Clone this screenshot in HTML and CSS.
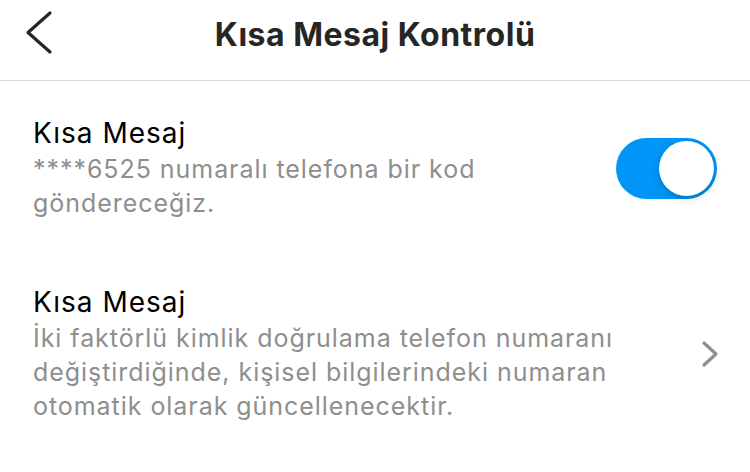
FILE: index.html
```html
<!DOCTYPE html>
<html lang="tr">

<head>
    <meta charset="UTF-8">
    <meta name="viewport" content="width=device-width, initial-scale=1.0">
    <title>Kısa Mesaj Kontrolü</title>
    <link rel="stylesheet" href="styles.css">
</head>

<body>
    <!-- Header -->
    <div class="header">
        <button class="back">
            <svg width="30" height="50" viewBox="0 0 30 50">
                <polyline points="26,3 4,22.5 26,42" fill="none" stroke="#262626" stroke-width="3.2"
                    stroke-linecap="round" stroke-linejoin="round" />
            </svg>
        </button>
        <h1 class="title">Kısa Mesaj Kontrolü</h1>
        <div></div>
    </div>

    <!-- Rows -->
    <div class="row">
        <div class="row-text">
            <div class="row-title">Kısa Mesaj</div>
            <div class="row-desc">****6525 numaralı telefona bir kod göndereceğiz.</div>
        </div>
        <div class="switch on">
            <span class="knob"></span>
        </div>
    </div>

    <div class="row">
        <div class="row-text">
            <div class="row-title">Kısa Mesaj</div>
            <div class="row-desc">İki faktörlü kimlik doğrulama telefon numaranı değiştirdiğinde, kişisel bilgilerindeki numaran otomatik olarak güncellenecektir.</div>
        </div>
        <svg class="chevron" width="20" height="30" viewBox="0 0 20 30">
            <polyline points="4,4 16,15 4,26" fill="none" stroke="#8e8e8e" stroke-width="3.2"
                stroke-linecap="round" stroke-linejoin="round" />
        </svg>
    </div>
</body>

</html>
```

FILE: styles.css
```css
* {
    box-sizing: border-box;
}

body {
    margin: 0;
    background-color: #fff;
    font-family: Inter, "Noto Sans", sans-serif;
    color: #000;
}

.header {
    display: grid;
    grid-template-columns: 1fr auto 1fr;
    align-items: center;
    height: 81px;
    padding-bottom: 11px;
    border-bottom: 1px solid #dbdbdb;
}

.back {
    justify-self: start;
    display: flex;
    margin-left: 24px;
    padding: 0;
    border: none;
    background: none;
}

.title {
    margin: 0;
    font-size: 32px;
    font-weight: 700;
    letter-spacing: 0.5px;
    color: #262626;
}

.row {
    display: flex;
    align-items: center;
    gap: 40px;
    padding: 35px 33px 30px;
}

.row-text {
    flex: 1;
}

.row-title {
    font-size: 28px;
    line-height: 34px;
    letter-spacing: 1px;
}

.row-desc {
    margin-top: 2px;
    font-size: 25px;
    line-height: 34px;
    letter-spacing: 0.95px;
    color: #8e8e8e;
}

.switch {
    display: flex;
    justify-content: flex-end;
    flex-shrink: 0;
    width: 101px;
    height: 61px;
    padding: 3px;
    border-radius: 31px;
    background-color: #0095f6;
}

.knob {
    width: 55px;
    height: 55px;
    border-radius: 50%;
    background-color: #fff;
    box-shadow: 0 3px 8px rgba(0, 0, 0, 0.15), 0 3px 1px rgba(0, 0, 0, 0.06);
}

.chevron {
    flex-shrink: 0;
    margin-right: -3px;
}
```
